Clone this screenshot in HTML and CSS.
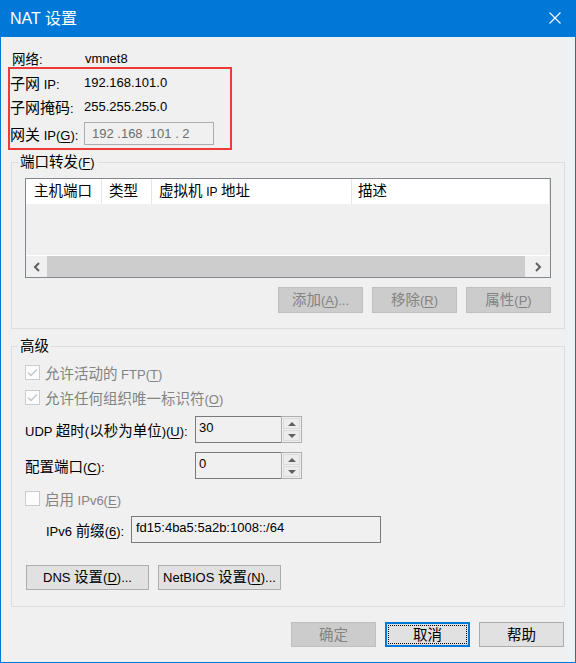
FILE: index.html
```html
<!DOCTYPE html>
<html lang="zh-CN">
<head>
<meta charset="utf-8">
<title>NAT 设置</title>
<link rel="stylesheet" href="styles.css">
</head>
<body>
<div class="window">
  <div class="titlebar">
    <span class="title">NAT 设置</span>
    <svg class="close" width="12" height="12" viewBox="0 0 12 12"><path d="M0.5 0.5L11.5 11.5M11.5 0.5L0.5 11.5" stroke="#fff" stroke-width="1.1" fill="none"/></svg>
  </div>
  <div class="content">
    <div class="row net"><span class="lbl"><span class="zs">网络</span>:</span><span>vmnet8</span></div>
    <div class="redbox">
      <div class="row r1"><span class="lbl2"><span class="z">子网</span> IP:</span><span>192.168.101.0</span></div>
      <div class="row r2"><span class="lbl2"><span class="z">子网掩码</span>:</span><span>255.255.255.0</span></div>
      <div class="row r3"><span class="lbl2"><span class="z">网关</span> IP(<u>G</u>):</span><span class="ipbox">192 .168 .101 . 2</span></div>
    </div>

    <fieldset class="group pf">
      <legend><span class="z">端口转发</span>(<u>F</u>)</legend>
      <div class="list">
        <div class="lhead">
          <div class="col c1"><span class="z">主机端口</span></div>
          <div class="col c2"><span class="z">类型</span></div>
          <div class="col c3"><span class="z">虚拟机</span> <span class="small">IP</span> <span class="z">地址</span></div>
          <div class="col c4"><span class="z">描述</span></div>
        </div>
        <div class="lbody"></div>
        <div class="hscroll">
          <div class="sbtn left"><svg width="8" height="10" viewBox="0 0 8 10"><polyline points="6,1 2,5 6,9" fill="none" stroke="#606060" stroke-width="2"/></svg></div>
          <div class="thumb"></div>
          <div class="sbtn right"><svg width="8" height="10" viewBox="0 0 8 10"><polyline points="2,1 6,5 2,9" fill="none" stroke="#606060" stroke-width="2"/></svg></div>
        </div>
      </div>
      <div class="btnrow">
        <div class="btn dis"><span><span class="z">添加</span>(<u>A</u>)...</span></div>
        <div class="btn dis"><span><span class="z">移除</span>(<u>R</u>)</span></div>
        <div class="btn dis"><span><span class="z">属性</span>(<u>P</u>)</span></div>
      </div>
    </fieldset>

    <fieldset class="group adv">
      <legend><span class="z">高级</span></legend>
      <div class="crow c-first">
        <span class="cbox checked"><svg width="11" height="9" viewBox="0 0 11 9"><polyline points="1,4.5 4,7.5 10,1.5" fill="none" stroke="#c4c4c4" stroke-width="1.3"/></svg></span>
        <span class="clabel"><span class="z">允许活动的</span> FTP(<u>T</u>)</span>
      </div>
      <div class="crow c-second">
        <span class="cbox checked"><svg width="11" height="9" viewBox="0 0 11 9"><polyline points="1,4.5 4,7.5 10,1.5" fill="none" stroke="#c4c4c4" stroke-width="1.3"/></svg></span>
        <span class="clabel"><span class="z">允许任何组织唯一标识符</span>(<u>O</u>)</span>
      </div>
      <div class="srow s-udp">
        <span class="slabel">UDP <span class="z">超时</span>(<span class="z">以秒为单位</span>)(<u>U</u>):</span>
        <div class="spin">
          <div class="sedit">30</div>
          <div class="sbtns">
            <div class="sb"><svg width="8" height="4" viewBox="0 0 8 4"><polygon points="0,4 8,4 4,0" fill="#606060"/></svg></div>
            <div class="sb"><svg width="8" height="4" viewBox="0 0 8 4"><polygon points="0,0 8,0 4,4" fill="#606060"/></svg></div>
          </div>
        </div>
      </div>
      <div class="srow s-port">
        <span class="slabel"><span class="z">配置端口</span>(<u>C</u>):</span>
        <div class="spin">
          <div class="sedit">0</div>
          <div class="sbtns">
            <div class="sb"><svg width="8" height="4" viewBox="0 0 8 4"><polygon points="0,4 8,4 4,0" fill="#606060"/></svg></div>
            <div class="sb"><svg width="8" height="4" viewBox="0 0 8 4"><polygon points="0,0 8,0 4,4" fill="#606060"/></svg></div>
          </div>
        </div>
      </div>
      <div class="crow c-third">
        <span class="cbox"></span>
        <span class="clabel"><span class="z">启用</span> IPv6(<u>E</u>)</span>
      </div>
      <div class="prow">
        <span class="plabel">IPv6 <span class="z">前缀</span>(<u>6</u>):</span>
        <div class="pinput">fd15:4ba5:5a2b:1008::/64</div>
      </div>
      <div class="arow">
        <div class="btn wide"><span>DNS <span class="z">设置</span>(<u>D</u>)...</span></div>
        <div class="btn wide"><span>NetBIOS <span class="z">设置</span>(<u>N</u>)...</span></div>
      </div>
    </fieldset>

    <div class="footer">
      <div class="btn dis"><span class="z">确定</span></div>
      <div class="btn focus"><span class="frect"><span class="z">取消</span></span></div>
      <div class="btn"><span class="z">帮助</span></div>
    </div>
  </div>
</div>
</body>
</html>
```

FILE: styles.css
```css
* { box-sizing: border-box; }
html, body { margin: 0; padding: 0; }
body {
  width: 576px;
  height: 663px;
  background: #f0f0f0;
  font-family: "Liberation Sans", "Noto Sans CJK SC", sans-serif;
  font-size: 13px;
  color: #000;
  overflow: hidden;
}
u { text-decoration: underline; text-underline-offset: 2px; }
.z { font-size: 14.5px; }
.zs { font-size: 13.5px; }

.window {
  width: 576px;
  height: 663px;
  border: 1px solid #0078d7;
  border-top: 0;
  background: #f0f0f0;
  display: flex;
  flex-direction: column;
}

.titlebar {
  height: 37px;
  margin: 0 -1px;
  background: #0078d7;
  color: #fff;
  display: flex;
  align-items: center;
  justify-content: space-between;
  padding: 0 15px 0 10px;
}
.title { font-size: 16px; line-height: 20px; }
.close { display: block; margin-top: -1px; }

.content {
  flex: 1;
  padding: 0 10px;
  display: flex;
  flex-direction: column;
}

.row { display: flex; align-items: center; white-space: nowrap; }
.net { margin-top: 12px; height: 18px; padding-left: 1px; }
.lbl { width: 73px; }

.redbox {
  margin-left: -3px;
  width: 224px;
  border: 2px solid #ee3a3a;
  padding: 3px 0;
}
.lbl2 { width: 74px; }
.lbl2 .z { font-size: 15px; }
.r1 { height: 20px; }
.r2 { height: 20px; margin-top: 4px; }
.r3 { height: 23px; margin-top: 6px; }
.ipbox {
  width: 130px;
  height: 23px;
  border: 1px solid #adadad;
  background: #f0f0f0;
  color: #6d6d6d;
  padding-left: 7px;
  line-height: 21px;
  white-space: pre;
}

.group {
  margin: 0;
  min-width: 0;
  border: 1px solid #dcdcdc;
  padding: 8px 13px 15px 13px;
}
.group legend {
  padding: 0 2px;
  margin-left: -7px;
  line-height: 16px;
  height: 16px;
  white-space: nowrap;
}
.pf { margin-top: 4px; }

.list {
  height: 100px;
  border: 1px solid #828790;
  display: flex;
  flex-direction: column;
  background: #f0f0f0;
}
.lhead {
  height: 25px;
  background: #fff;
  display: flex;
}
.col {
  height: 25px;
  line-height: 25px;
  border-right: 1px solid #e5e5e5;
  white-space: nowrap;
}
.c1 { width: 76px; padding-left: 8px; }
.c2 { width: 50px; padding-left: 7px; }
.c3 { width: 200px; padding-left: 7px; }
.c4 { flex: 1; padding-left: 6px; }
.small { font-size: 12px; }
.lbody { flex: 1; }
.hscroll {
  height: 22px;
  border-top: 1px solid #fff;
  display: flex;
}
.sbtn {
  display: flex;
  align-items: center;
  justify-content: center;
}
.sbtn.left { width: 21px; }
.sbtn.right { width: 25px; }
.thumb { flex: 1; background: #cdcdcd; }

.btnrow {
  margin-top: 9px;
  display: flex;
  justify-content: flex-end;
  gap: 9px;
}
.btn {
  width: 85px;
  height: 26px;
  border: 1px solid #adadad;
  background: #e1e1e1;
  display: flex;
  align-items: center;
  justify-content: center;
  white-space: nowrap;
  line-height: 18px;
}
.btn.dis {
  background: #cccccc;
  border-color: #bfbfbf;
  color: #838383;
}

.adv { margin-top: 9px; padding-bottom: 16px; }
.crow {
  height: 20px;
  display: flex;
  align-items: center;
  color: #838383;
  white-space: nowrap;
}
.c-second { margin-top: 5px; }
.c-third { margin-top: 9px; }
.cbox {
  width: 15px;
  height: 15px;
  flex: none;
  border: 1px solid #cccccc;
  background: #fcfcfc;
  display: flex;
  align-items: center;
  justify-content: center;
  margin-right: 5px;
}
.srow {
  height: 27px;
  display: flex;
  align-items: center;
  margin-top: 9px;
}
.slabel { width: 170px; white-space: nowrap; }
.spin {
  width: 107px;
  height: 27px;
  display: flex;
  background: #f0f0f0;
}
.sedit {
  flex: 1;
  border: 1px solid #7a7a7a;
  border-right: 0;
  padding: 3px 0 0 3px;
  line-height: 16px;
}
.sbtns {
  width: 21px;
  border: 1px solid #adadad;
  padding: 1px;
  display: flex;
  flex-direction: column;
  gap: 1px;
}
.sb {
  flex: 1;
  border: 1px solid #dadada;
  background: #ececec;
  display: flex;
  align-items: center;
  justify-content: center;
}
.prow {
  margin-top: 8px;
  height: 27px;
  display: flex;
  align-items: center;
  padding-left: 21px;
}
.plabel { width: 85px; white-space: nowrap; }
.pinput {
  width: 250px;
  height: 27px;
  border: 1px solid #7a7a7a;
  background: #f0f0f0;
  padding: 3px 0 0 4px;
  line-height: 16px;
}
.arow {
  margin-top: 22px;
  display: flex;
  gap: 9px;
  padding-left: 1px;
}
.btn.wide { width: 123px; height: 25px; }

.footer {
  margin-top: 15px;
  display: flex;
  justify-content: flex-end;
  gap: 9px;
  padding-right: 1px;
}
.footer .btn { height: 25px; }
.btn.focus {
  border: 2px solid #0078d7;
  padding: 1px;
}
.frect {
  width: 100%;
  height: 100%;
  border: 1px dotted #000;
  display: flex;
  align-items: center;
  justify-content: center;
}
```
